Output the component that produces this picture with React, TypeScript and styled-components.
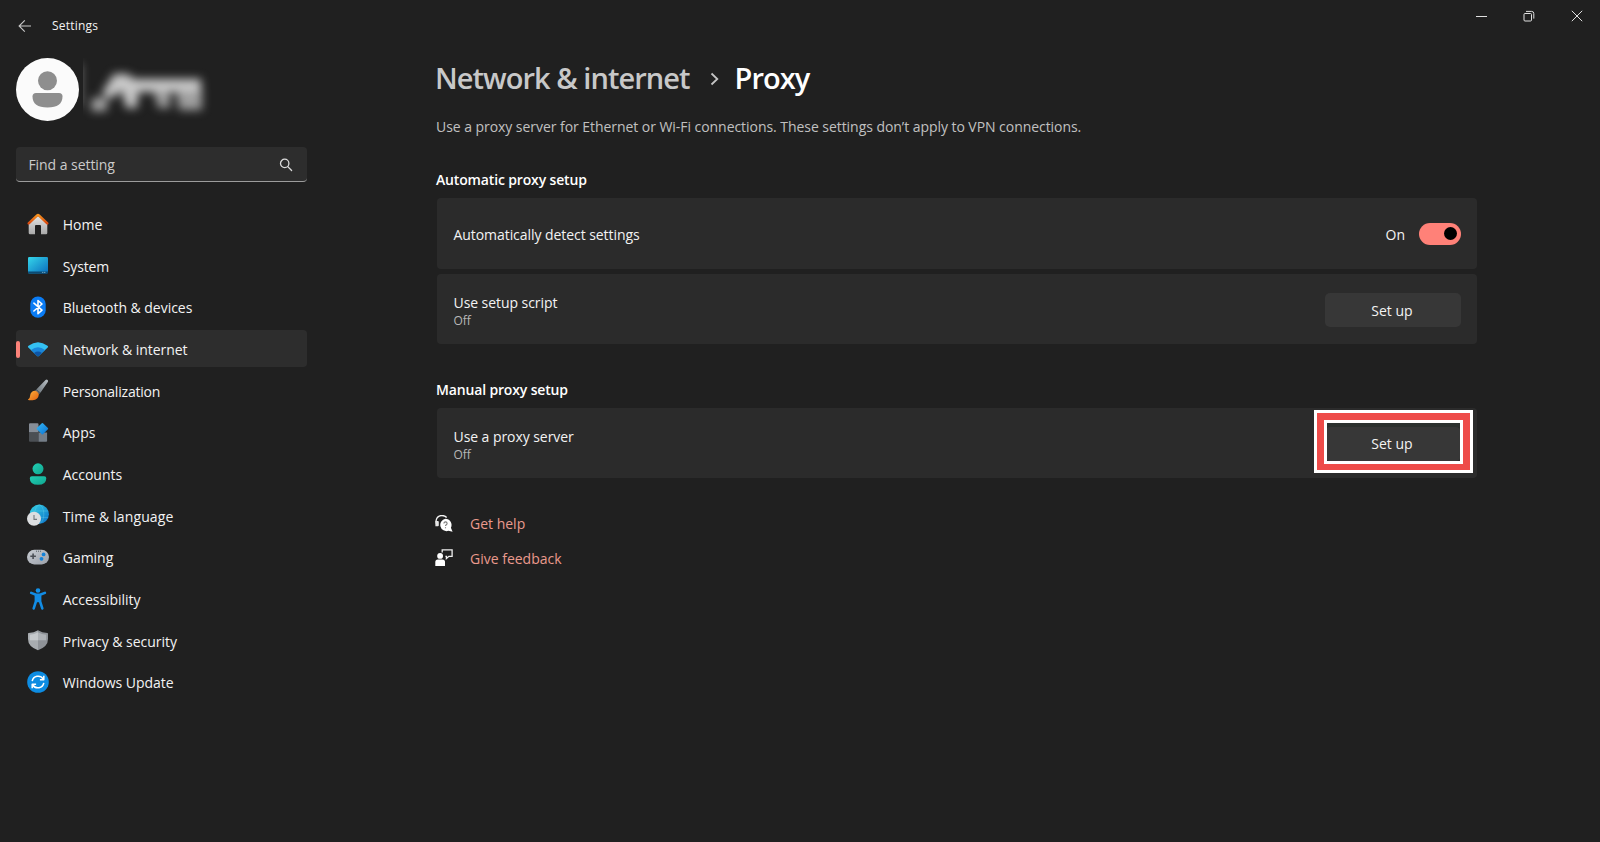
import React from 'react';
import styled, { createGlobalStyle } from 'styled-components';

// icons
const HomeIcon = (
  <svg width="24" height="24" viewBox="0 0 24 24">
    <defs>
      <linearGradient id="homeWall" x1="0" y1="0" x2="0" y2="1">
        <stop offset="0" stopColor="#e4e4e4" />
        <stop offset="1" stopColor="#a9a9a9" />
      </linearGradient>
      <linearGradient id="homeRoof" x1="0" y1="0" x2="0" y2="1">
        <stop offset="0" stopColor="#f6921e" />
        <stop offset="1" stopColor="#d9480f" />
      </linearGradient>
    </defs>
    <path d="M2.700 10.500 12 3.900l9.300 6.600v10.400q0 1.300-1.300 1.300h-5V14q0-1-1-1h-4q-1 0-1 1v8.200H4q-1.300 0-1.300-1.300z" fill="url(#homeWall)" />
    <path d="M2.700 11.400 11.200 3.400q.8-.7 1.600 0l8.500 8" fill="none" stroke="url(#homeRoof)" strokeWidth="2.500" strokeLinecap="round" strokeLinejoin="round" />
  </svg>
);

const SystemIcon = (
  <svg width="24" height="24" viewBox="0 0 24 24">
    <defs>
      <linearGradient id="screen" x1="0" y1="0" x2="1" y2="1">
        <stop offset="0" stopColor="#35d6ea" />
        <stop offset="1" stopColor="#0a6cbd" />
      </linearGradient>
    </defs>
    <rect x="2" y="4" width="20" height="16.400" rx="1.200" fill="url(#screen)" />
    <path d="M2 18.400h20v.9q0 1.100-1.100 1.100H3.100q-1.100 0-1.100-1.100z" fill="#0b4a73" />
    <path d="M16.300 19.400h1M18.300 19.400h1" stroke="#8fc6e4" strokeWidth="1" />
  </svg>
);

const BluetoothIcon = (
  <svg width="24" height="24" viewBox="0 0 24 24">
    <rect x="4.300" y="1.400" width="15.400" height="21.400" rx="7.600" fill="#0a7cf5" />
    <path d="M7.900 8.200 16 15.200 12 18.700V5.500l4 3.500-8.100 7" fill="none" stroke="#fff" strokeWidth="1.600" strokeLinejoin="round" strokeLinecap="round" />
  </svg>
);

const NetworkIcon = (
  <svg width="24" height="24" viewBox="0 0 24 24">
    <path d="M1.900 9.600Q2 9.100 2.500 8.700 12 1.600 21.500 8.700q.5.400.6.900 0 .4-.4.900L12.700 19q-.7.600-1.400 0L2.300 10.500q-.4-.5-.4-.9z" fill="#34c1f2" />
    <path d="M5 13q7-5.400 14 0l-6.300 6q-.7.600-1.400 0z" fill="#1a86da" />
    <path d="M8 15.900q4-2.900 8 0L12.700 19q-.7.600-1.400 0z" fill="#0d55a6" />
  </svg>
);

const BrushIcon = (
  <svg width="24" height="24" viewBox="0 0 24 24">
    <defs>
      <linearGradient id="handle" x1="1" y1="0" x2="0" y2="1">
        <stop offset="0" stopColor="#b9c0c5" />
        <stop offset="1" stopColor="#6c757b" />
      </linearGradient>
      <linearGradient id="bristle" x1="0" y1="0" x2="1" y2="1">
        <stop offset="0" stopColor="#ffb13d" />
        <stop offset="1" stopColor="#e2620f" />
      </linearGradient>
    </defs>
    <path d="M21.600 1.900q.9.900.2 2L14.400 14.700l-4.100-3.200L19.500 2q1.200-1 2.100-.1z" fill="url(#handle)" />
    <path d="M10.300 11.500l4.100 3.200-1.300 1.600-4.400-3.300z" fill="#5d656b" />
    <path d="M8.500 12.700q3.200.3 4.400 3.600-.5 5.500-6.300 5.900-2.400.3-4.400-.1-.6-.6.400-1.100 1.300-.8 1.500-3.300.4-4.200 4.400-5z" fill="url(#bristle)" />
  </svg>
);

const AppsIcon = (
  <svg width="24" height="24" viewBox="0 0 24 24">
    <defs>
      <linearGradient id="diamond" x1="0" y1="0" x2="1" y2="1">
        <stop offset="0" stopColor="#35b8f5" />
        <stop offset="1" stopColor="#0b72d2" />
      </linearGradient>
    </defs>
    <path d="M4 3.200h7.500q1 0 1 1v8.300H3V4.200q0-1 1-1z" fill="#868d97" />
    <path d="M3 12.500h9.500v9.300H4q-1 0-1-1z" fill="#4b4f54" />
    <path d="M12.500 12.500h8.600v8.300q0 1-1 1h-7.600z" fill="#747d87" />
    <path d="M15.800 3.200q.6-.6 1.200 0l4.900 4.900q.6.600 0 1.200L17 14.200q-.6.600-1.200 0l-4.900-4.900q-.6-.6 0-1.200z" fill="url(#diamond)" />
  </svg>
);

const AccountsIcon = (
  <svg width="24" height="24" viewBox="0 0 24 24">
    <defs>
      <linearGradient id="person" x1="0" y1="0" x2="1" y2="1">
        <stop offset="0" stopColor="#22cfb4" />
        <stop offset="1" stopColor="#10a58f" />
      </linearGradient>
    </defs>
    <circle cx="12" cy="6.800" r="5.500" fill="url(#person)" />
    <path d="M5.900 14.200h12.300q2.100 0 2.100 2 0 6.600-8.300 6.600t-8.200-6.600q0-2 2.100-2z" fill="url(#person)" />
  </svg>
);

const TimeIcon = (
  <svg width="24" height="24" viewBox="0 0 24 24">
    <defs>
      <linearGradient id="globe" x1="0" y1="0" x2="1" y2="1">
        <stop offset="0" stopColor="#35d3e3" />
        <stop offset="1" stopColor="#0a6fc9" />
      </linearGradient>
    </defs>
    <circle cx="13.300" cy="11.200" r="9.600" fill="url(#globe)" />
    <g fill="none" stroke="#7fe2f0" strokeOpacity=".35" strokeWidth=".8">
      <ellipse cx="13.300" cy="11.200" rx="4.500" ry="9.300" />
      <path d="M4.500 8h17.600M4.500 14.400h17.600" />
    </g>
    <circle cx="8" cy="15.800" r="7" fill="#dcdee0" />
    <path d="M8 12v4.400h3" fill="none" stroke="#75797d" strokeWidth="1.100" />
  </svg>
);

const GamingIcon = (
  <svg width="24" height="24" viewBox="0 0 24 24">
    <defs>
      <linearGradient id="pad" x1="0" y1="0" x2="1" y2="1">
        <stop offset="0" stopColor="#c8ccd2" />
        <stop offset="1" stopColor="#9a9fa8" />
      </linearGradient>
    </defs>
    <rect x="1" y="4.800" width="22" height="14.600" rx="7.300" fill="url(#pad)" />
    <path d="M4.300 11.200h5.600M7.100 8.400V14" stroke="#4b4f55" strokeWidth="1.600" />
    <path d="M10 6.200h1M12 6.200h1M14 6.200h1" stroke="#555a60" strokeWidth="1" />
    <circle cx="17.600" cy="9.400" r="1.900" fill="#1482d8" />
    <circle cx="15.500" cy="13.800" r="1.900" fill="#1482d8" />
  </svg>
);

const AccessibilityIcon = (
  <svg width="24" height="24" viewBox="0 0 24 24">
    <circle cx="12" cy="3.500" r="2.300" fill="#1292ea" />
    <path d="M5.200 5.900 10 7.700h4l4.900-1.800M9.800 9h4.400M12 8.500V14M9.900 8.500v6L7.700 21.400M14.100 8.500v6l2.200 6.900" fill="none" stroke="#128ce4" strokeWidth="2.600" strokeLinecap="round" strokeLinejoin="round" />
  </svg>
);

const ShieldIcon = (
  <svg width="24" height="24" viewBox="0 0 24 24">
    <path d="M12 2.300q4 2.500 9.400 2.800.6 0 .6.700V11q0 7.700-10 11.200z" fill="#8e9297" />
    <path d="M12 2.300Q8 4.800 2.600 5.100 2 5.100 2 5.800V11q0 7.700 10 11.200z" fill="#a8acb0" />
    <path d="M12 4.200q3.600 2 8.200 2.500V11q0 .7-.2 1.300h-8z" fill="#aeb2b6" />
    <path d="M12 4.200Q8.400 6.200 3.800 6.700V11q0 .7.200 1.300h8z" fill="#c6c9cc" />
  </svg>
);

const UpdateIcon = (
  <svg width="24" height="24" viewBox="0 0 24 24">
    <circle cx="12" cy="12" r="10.800" fill="#0d8ce2" />
    <g fill="none" stroke="#fff" strokeWidth="1.500" strokeLinejoin="round">
      <path d="M6.200 11.200a6 6 0 0 1 11-2.200M17.800 12.800a6 6 0 0 1-11 2.200" />
      <path d="M17.800 5.800v3.900h-3.900M6.200 18.200v-3.900h3.900" />
    </g>
  </svg>
);

const BackIcon = (
  <svg width="14" height="14" viewBox="0 0 14 14" fill="none" stroke="#c9c9c9" strokeWidth="1.100">
    <path d="M13 7H1.200M6.800 1.300 1.100 7l5.700 5.700" />
  </svg>
);

const SearchIcon = (
  <svg width="14" height="14" viewBox="0 0 14 14" fill="none" stroke="#dcdcdc" strokeWidth="1.300">
    <circle cx="5.700" cy="5.400" r="4.200" />
    <path d="m8.800 8.600 3.800 3.900" strokeLinecap="round" />
  </svg>
);

const HelpIcon = (
  <svg width="18" height="18" viewBox="0 0 18 18">
    <path d="M1.700 10Q.9 8 1.100 5.700 1.900.5 7 .5q3 0 4.700 2" fill="none" stroke="#f5f5f5" strokeWidth="1.300" />
    <path d="M.4 6.100h2.400q1 0 1 1v3.200q0 1-1 1H.4z" fill="#e6e6e6" />
    <path d="M10.400 3.800a6.200 6.200 0 0 1 5.500 9l1.700 3.900-4.200-.9a6.200 6.200 0 1 1-3-12z" fill="#fff" />
    <path d="M8.900 8.500q0-1.600 1.600-1.600t1.600 1.600q0 .8-.8 1.200-.8.500-.8 1.300M10.500 12.200v1.100" fill="none" stroke="#7a7a7a" strokeWidth="1.100" />
  </svg>
);

const FeedbackIcon = (
  <svg width="18" height="18" viewBox="0 0 18 18">
    <path d="M7.200 3.400V.9h9.900v6.400h-3.200l-2.500 2.200V7.300h-1" fill="none" stroke="#f0f0f0" strokeWidth="1.300" />
    <circle cx="5.100" cy="6.900" r="2.900" fill="#fff" />
    <path d="M.3 17v-4q0-2.500 2.500-2.500h4.700Q10 10.500 10 13v4z" fill="#fff" />
  </svg>
);

const navItems = [
  { label: 'Home', icon: HomeIcon },
  { label: 'System', icon: SystemIcon, tracking: -0.15 },
  { label: 'Bluetooth & devices', icon: BluetoothIcon },
  { label: 'Network & internet', icon: NetworkIcon, active: true },
  { label: 'Personalization', icon: BrushIcon, tracking: -0.2 },
  { label: 'Apps', icon: AppsIcon },
  { label: 'Accounts', icon: AccountsIcon },
  { label: 'Time & language', icon: TimeIcon, tracking: 0.12 },
  { label: 'Gaming', icon: GamingIcon },
  { label: 'Accessibility', icon: AccessibilityIcon },
  { label: 'Privacy & security', icon: ShieldIcon },
  { label: 'Windows Update', icon: UpdateIcon },
];

const App = () => (
  <Window>
    <GlobalStyle />
    <TitleBar>
      <BackButton>{BackIcon}</BackButton>
      <AppName>Settings</AppName>
      <WindowControls>
        <svg width="12" height="12" viewBox="0 0 12 12" stroke="#e0e0e0">
          <path d="M1 6.500h11" />
        </svg>
        <svg width="12" height="12" viewBox="0 0 12 12" fill="none" stroke="#e0e0e0">
          <rect x="1" y="3.500" width="7.500" height="7.500" rx="1" />
          <path d="M3 1.400h5.600q2.200 0 2.200 2.200v5" />
        </svg>
        <svg width="12" height="12" viewBox="0 0 12 12" stroke="#e0e0e0">
          <path d="m.8.800 10.400 10.400M11.200.8.800 11.200" />
        </svg>
      </WindowControls>
    </TitleBar>

    <Body>
      <Sidebar>
        <Profile>
          <svg width="63" height="63" viewBox="0 0 63 63">
            <circle cx="31.500" cy="31.500" r="31.500" fill="#fbfbfb" />
            <circle cx="31.500" cy="22.700" r="9.500" fill="#8e8e8e" />
            <path d="M20 35h23q3.500 0 3.500 3.500 0 11-15 11t-15-11Q16.500 35 20 35z" fill="#8e8e8e" />
          </svg>
          <HiddenName width="130" height="63" viewBox="0 0 130 63">
            <defs>
              <filter id="soft" x="-20%" y="-40%" width="140%" height="180%" colorInterpolationFilters="sRGB">
                <feGaussianBlur stdDeviation="5" />
              </filter>
            </defs>
            <g filter="url(#soft)" fill="#c8c8c8">
              <path d="M-8 6h6v42h-6z" fillOpacity=".6" />
              <path d="M9 40h15v13H8z" fillOpacity=".8" />
              <path d="m19 35 12-19h14l11 10-2 24H43l-4-17-13 8z" />
              <path d="M50 21h68v13H52z" />
              <path d="M71 34h16v16H75zM93 32h26v20H96z" fillOpacity=".75" />
            </g>
          </HiddenName>
        </Profile>

        <SearchBox>
          <span>Find a setting</span>
          {SearchIcon}
        </SearchBox>

        <Nav>
          {navItems.map(({ label, icon, active, tracking }) => (
            <NavItem key={label} $active={active} $tracking={tracking}>
              {icon}
              <span>{label}</span>
            </NavItem>
          ))}
        </Nav>
      </Sidebar>

      <Main>
        <Breadcrumb>
          <Crumb>Network &amp; internet</Crumb>
          <svg width="10" height="14" viewBox="0 0 10 14" fill="none" stroke="#c4c4c4" strokeWidth="1.800">
            <path d="m1.500 1.500 5.800 5.500-5.800 5.500" />
          </svg>
          <Crumb $current>Proxy</Crumb>
        </Breadcrumb>
        <Description>
          Use a proxy server for Ethernet or Wi-Fi connections. These settings don’t apply to VPN connections.
        </Description>

        <SectionTitle $marginTop={33}>Automatic proxy setup</SectionTitle>
        <Card $height={71}>
          <CardText>
            <Label>Automatically detect settings</Label>
          </CardText>
          <ToggleGroup>
            <span>On</span>
            <Toggle />
          </ToggleGroup>
        </Card>
        <Card $height={70}>
          <CardText>
            <Label>Use setup script</Label>
            <Status>Off</Status>
          </CardText>
          <Button>Set up</Button>
        </Card>

        <SectionTitle $marginTop={36}>Manual proxy setup</SectionTitle>
        <Card $height={70}>
          <CardText>
            <Label>Use a proxy server</Label>
            <Status>Off</Status>
          </CardText>
          <Button $marked>
            Set up
            <Highlight />
          </Button>
        </Card>

        <Links>
          <LinkRow>
            {HelpIcon}
            <span>Get help</span>
          </LinkRow>
          <LinkRow>
            {FeedbackIcon}
            <span>Give feedback</span>
          </LinkRow>
        </Links>
      </Main>
    </Body>
  </Window>
);

export default App;

const GlobalStyle = createGlobalStyle`
  * {
    box-sizing: border-box;
  }

  body {
    margin: 0;
    background: #202020;
  }

  svg {
    display: block;
    flex: none;
  }
`;

const Window = styled.div`
  height: 842px;
  overflow: hidden;
  background: #202020;
  color: #f3f3f3;
  font-family: 'Open Sans', 'Noto Sans', sans-serif;
  font-size: 14px;
  line-height: 20px;
`;

const TitleBar = styled.header`
  display: flex;
  height: 50px;
  padding-left: 18px;
`;

const BackButton = styled.div`
  padding-top: 19px;
`;

const AppName = styled.div`
  margin: 16px 0 0 20px;
  font-size: 12px;
  letter-spacing: 0.200px;
`;

const WindowControls = styled.div`
  display: flex;
  gap: 36px;
  margin-left: auto;
  padding: 10px 17px 0 0;
`;

const Body = styled.div`
  display: grid;
  grid-template-columns: 307.400px 1040px;
  column-gap: 129.600px;
`;

const Sidebar = styled.aside`
  padding: 8px 0 0 16.400px;
`;

const Profile = styled.div`
  display: flex;
  gap: 4px;
`;

const HiddenName = styled.svg`
  overflow: hidden;
`;

const SearchBox = styled.div`
  display: flex;
  align-items: center;
  justify-content: space-between;
  height: 35px;
  margin-top: 26px;
  padding: 1px 14px 0 12px;
  border-bottom: 1px solid #9c9c9c;
  border-radius: 4px;
  background: #2d2d2d;
  color: #cbcbcb;
  letter-spacing: -0.050px;
`;

const Nav = styled.nav`
  display: grid;
  grid-auto-rows: 37.500px;
  row-gap: 4.170px;
  margin-top: 23px;
`;

const NavItem = styled.div<{ $active?: boolean; $tracking?: number }>`
  position: relative;
  display: flex;
  align-items: center;
  gap: 13px;
  padding-left: 9.400px;
  border-radius: 4px;
  background: ${({ $active }) => ($active ? '#2d2d2d' : 'transparent')};
  letter-spacing: ${({ $tracking }) => $tracking ?? -0.03}px;

  span {
    padding-top: 2.800px;
  }

  &::before {
    content: '';
    position: absolute;
    left: 0;
    top: 11px;
    display: ${({ $active }) => ($active ? 'block' : 'none')};
    width: 4px;
    height: 17px;
    border-radius: 2px;
    background: #fb8279;
  }
`;

const Main = styled.main`
  padding-top: 8px;
`;

const Breadcrumb = styled.div`
  display: flex;
  align-items: center;
  height: 40px;
  margin-left: -2px;

  svg {
    margin: 2px 15px 0 20px;
  }
`;

const Crumb = styled.h1<{ $current?: boolean }>`
  margin: 0;
  color: ${({ $current }) => ($current ? '#ffffff' : '#c8c8c8')};
  font-size: 29px;
  font-weight: 600;
  letter-spacing: -0.950px;
  line-height: 40px;
`;

const Description = styled.p`
  margin: 19px 0 0 -1px;
  color: #c0c0c0;
  letter-spacing: -0.050px;
  white-space: nowrap;
`;

const SectionTitle = styled.h2<{ $marginTop: number }>`
  margin: ${({ $marginTop }) => $marginTop}px 0 8px -1px;
  color: #ffffff;
  font-size: 14px;
  font-weight: 600;
  letter-spacing: -0.150px;
`;

const Card = styled.div<{ $height: number }>`
  display: flex;
  align-items: center;
  justify-content: space-between;
  height: ${({ $height }) => $height}px;
  padding: 0 16px;
  border-radius: 4px;
  background: #2b2b2b;

  & + & {
    margin-top: 5px;
  }
`;

const CardText = styled.div`
  padding: 3px 0 0 0.500px;
`;

const Label = styled.div`
  letter-spacing: -0.060px;
  line-height: 20px;
`;

const Status = styled.div`
  color: #b8b8b8;
  font-size: 12px;
  line-height: 15px;
`;

const ToggleGroup = styled.div`
  display: flex;
  align-items: center;
  gap: 14px;

  span {
    padding-top: 2px;
  }
`;

const Toggle = styled.div`
  display: flex;
  align-items: center;
  justify-content: flex-end;
  width: 42px;
  height: 22px;
  padding-right: 4px;
  border-radius: 11px;
  background: #ff8178;

  &::after {
    content: '';
    width: 13px;
    height: 13px;
    border-radius: 50%;
    background: #000000;
  }
`;

const Button = styled.div<{ $marked?: boolean }>`
  position: relative;
  top: 1px;
  width: 136px;
  height: 34px;
  padding: 1px 2px 0 0;
  border-radius: 5px;
  background: #373737;
  line-height: ${({ $marked }) => ($marked ? 32 : 34)}px;
  text-align: center;
`;

// double white outline around a red band
const Highlight = styled.div`
  position: absolute;
  inset: -17px -12px -12px -11px;
  border: 3px solid #ffffff;

  &::before {
    content: '';
    position: absolute;
    inset: 0;
    border: 7px solid #ee4b49;
    border-bottom-width: 6px;
  }

  &::after {
    content: '';
    position: absolute;
    inset: 7px 7px 6px;
    border: 3px solid #ffffff;
    box-shadow: inset 0 4px 0 #2c302e;
  }
`;

const Links = styled.div`
  display: grid;
  gap: 10px;
  margin: 34px 0 0 -1.500px;
`;

const LinkRow = styled.div`
  display: flex;
  align-items: center;
  gap: 16.500px;
  height: 24px;
  color: #ea9a8d;

  & + & span {
    padding-top: 1px;
  }
`;
